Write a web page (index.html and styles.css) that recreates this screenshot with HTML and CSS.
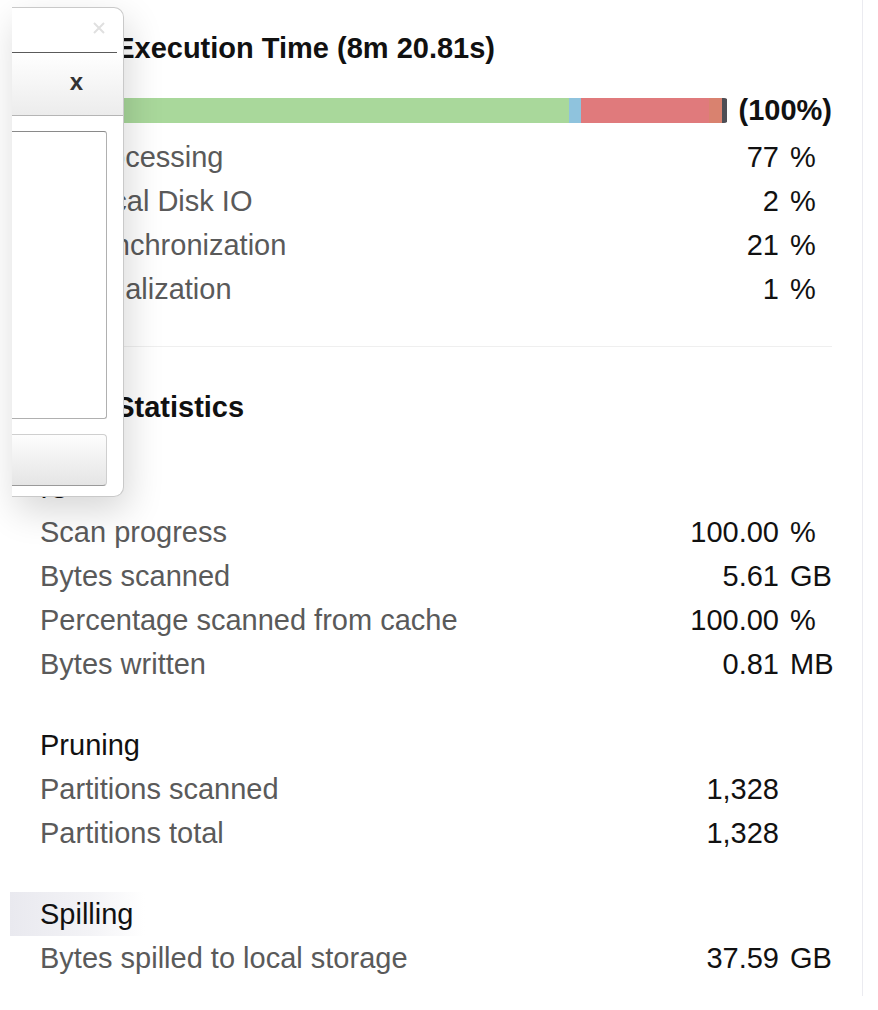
FILE: index.html
```html
<!DOCTYPE html>
<html lang="en">
<head>
    <meta charset="UTF-8">
    <meta name="viewport" content="width=device-width, initial-scale=1.0">
    <title>Query Profile - Statistics</title>
    <link rel="stylesheet" href="styles.css">
</head>
<body>
    <div class="panel">
        <h2 class="section-title">Total Execution Time (8m 20.81s)</h2>
        <div class="bar-row">
            <div class="bar">
                <span class="seg seg-processing" style="width: 75.5%"></span>
                <span class="seg seg-disk" style="width: 1.9%"></span>
                <span class="seg seg-sync" style="width: 19.7%"></span>
                <span class="seg seg-other" style="width: 2%"></span>
                <span class="seg seg-init" style="width: 0.9%"></span>
            </div>
            <span class="bar-total">(100%)</span>
        </div>
        <div class="stats indented">
            <div class="stat"><span class="label">Processing</span><span class="num">77</span><span class="unit">%</span></div>
            <div class="stat"><span class="label">Local Disk IO</span><span class="num">2</span><span class="unit">%</span></div>
            <div class="stat"><span class="label">Synchronization</span><span class="num">21</span><span class="unit">%</span></div>
            <div class="stat"><span class="label">Initialization</span><span class="num">1</span><span class="unit">%</span></div>
        </div>

        <hr class="divider">

        <h2 class="section-title stats-title">Total Statistics</h2>

        <div class="group">
            <div class="group-title">IO</div>
            <div class="stat"><span class="label">Scan progress</span><span class="num">100.00</span><span class="unit">%</span></div>
            <div class="stat"><span class="label">Bytes scanned</span><span class="num">5.61</span><span class="unit">GB</span></div>
            <div class="stat"><span class="label">Percentage scanned from cache</span><span class="num">100.00</span><span class="unit">%</span></div>
            <div class="stat"><span class="label">Bytes written</span><span class="num">0.81</span><span class="unit">MB</span></div>
        </div>

        <div class="group">
            <div class="group-title">Pruning</div>
            <div class="stat"><span class="label">Partitions scanned</span><span class="num">1,328</span><span class="unit"></span></div>
            <div class="stat"><span class="label">Partitions total</span><span class="num">1,328</span><span class="unit"></span></div>
        </div>

        <div class="group">
            <div class="group-title highlight">Spilling</div>
            <div class="stat"><span class="label">Bytes spilled to local storage</span><span class="num">37.59</span><span class="unit">GB</span></div>
        </div>
    </div>

    <div class="dialog">
        <div class="dialog-titlebar">
            <svg class="dialog-close" width="14" height="14" viewBox="0 0 14 14">
                <path d="M2 2 L12 12 M12 2 L2 12" stroke="#e0e0e0" stroke-width="2" fill="none"/>
            </svg>
        </div>
        <div class="dialog-header"><span class="dialog-x">x</span></div>
        <div class="dialog-text"></div>
        <div class="dialog-button"></div>
    </div>
</body>
</html>
```

FILE: styles.css
```css
body {
    font-family: "Liberation Sans", Arial, sans-serif;
    background-color: #fff;
    margin: 0;
    color: #111;
}

.panel {
    width: 792px;
    min-height: 970px;
    padding: 26px 30px 0 40px;
    border-right: 1px solid #ebebf0;
    font-size: 29px;
    line-height: 44px;
}

.section-title {
    margin: 0;
    font-size: 29px;
    font-weight: bold;
    line-height: 44px;
    color: #111;
}

.bar-row {
    display: flex;
    align-items: center;
    height: 44px;
    margin: 18px 0 3px 40px;
}

.bar {
    flex: 1;
    display: flex;
    height: 25px;
    border-radius: 0 4px 4px 0;
    overflow: hidden;
}

.seg {
    height: 100%;
}

.seg-processing {
    background-color: #a9d89b;
}

.seg-disk {
    background-color: #8fc3dd;
}

.seg-sync {
    background-color: #e07a7c;
}

.seg-other {
    background-color: #d9826f;
}

.seg-init {
    background-color: #4e4e55;
}

.bar-total {
    margin-left: 11px;
    font-weight: bold;
}

.indented {
    padding-left: 40px;
}

.stat {
    display: grid;
    grid-template-columns: 1fr auto 42px;
    column-gap: 11px;
    height: 44px;
}

.label {
    color: #5a5a5a;
    white-space: nowrap;
}

.num {
    text-align: right;
    color: #111;
}

.unit {
    color: #111;
    white-space: nowrap;
}

.divider {
    margin: 35px 0 0 0;
    border: none;
    border-top: 1px solid #efefef;
}

.stats-title {
    margin-top: 38px;
}

.group {
    margin-top: 37px;
}

.group-title {
    height: 44px;
    color: #111;
}

.group-title.highlight {
    margin-left: -30px;
    padding-left: 30px;
    background: linear-gradient(to right, #e9e9ef 0, #f3f3f6 80px, rgba(255, 255, 255, 0) 135px);
}

/* dialog partly off the left edge */
.dialog {
    position: absolute;
    left: 12px;
    top: 7px;
    width: 111px;
    height: 488px;
    background-color: #fff;
    border: 1px solid #c9c9c9;
    border-left: none;
    border-radius: 0 10px 10px 0;
    box-shadow: 4px 14px 36px rgba(0, 0, 0, 0.16);
}

.dialog-titlebar {
    height: 44px;
    border-bottom: 1px solid #5a5a5a;
    margin-right: 6px;
    position: relative;
}

.dialog-close {
    position: absolute;
    right: 11px;
    top: 13px;
}

.dialog-header {
    height: 62px;
    display: flex;
    align-items: center;
    justify-content: flex-end;
    padding-right: 40px;
    background: linear-gradient(#ffffff, #ececec);
    border-bottom: 1px solid #b5b5b5;
}

.dialog-x {
    font-size: 24px;
    font-weight: bold;
    line-height: 24px;
    color: #333;
    padding-bottom: 4px;
}

.dialog-text {
    height: 286px;
    margin: 15px 16px 0 0;
    border: 1px solid #b0b0b0;
    border-top-color: #8a8a8a;
    border-left: none;
    border-radius: 0 3px 3px 0;
}

.dialog-button {
    height: 50px;
    margin: 15px 16px 0 0;
    background: linear-gradient(#fdfdfd, #e5e5e5);
    border: 1px solid #cfcfcf;
    border-bottom-color: #9a9a9a;
    border-left: none;
    border-radius: 0 4px 4px 0;
}
```
